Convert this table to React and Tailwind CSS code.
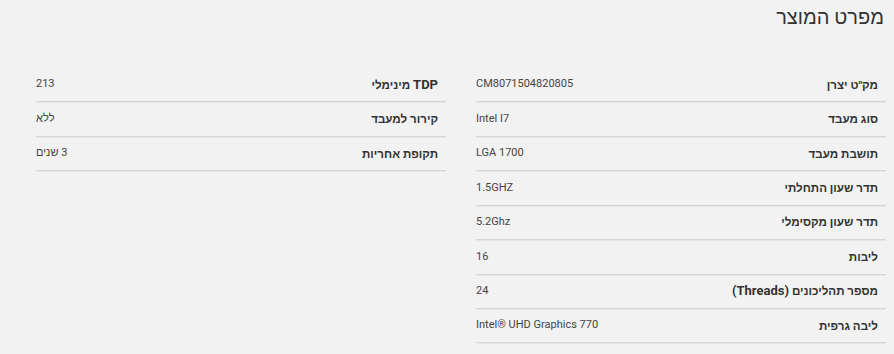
// Latin runs inside Hebrew labels keep the full 13px size; Hebrew text is set a touch smaller.
const Latin = ({ children }) => <span className="text-[13px]">{children}</span>;

const rightSpecs = [
  ["sku", <>מק"ט יצרן</>, "CM8071504820805"],
  ["cpu", <>סוג מעבד</>, "Intel I7"],
  ["socket", <>תושבת מעבד</>, "LGA 1700"],
  ["base", <>תדר שעון התחלתי</>, "1.5GHZ"],
  ["boost", <>תדר שעון מקסימלי</>, "5.2Ghz"],
  ["cores", <>ליבות</>, "16"],
  ["threads", <>מספר תהליכונים <Latin>(Threads)</Latin></>, "24"],
  ["gpu", <>ליבה גרפית</>, "Intel® UHD Graphics 770"],
];

const leftSpecs = [
  ["tdp", <><Latin>TDP</Latin> מינימלי</>, "213"],
  ["cooler", <>קירור למעבד</>, "ללא"],
  ["warranty", <>תקופת אחריות</>, "3 שנים"],
];

function SpecRow({ label, value }) {
  return (
    <div className="flex h-[34.43px] items-center justify-between border-b border-[#d6d6d6] shadow-[0_1px_0_#e6e6e6]">
      <span className="pr-[8px] text-[11.6px] font-bold leading-[16px] text-[#333]">{label}</span>
      <span className="text-[11px] text-[#444]">{value}</span>
    </div>
  );
}

export default function App() {
  return (
    <div
      dir="rtl"
      className="h-[354px] w-[894px] overflow-hidden bg-[#f2f2f2]"
      style={{ fontFamily: 'Roboto, "Liberation Sans", Arial, sans-serif' }}
    >
      <h2 className="pr-[10px] pt-[2px] text-[20px] font-normal leading-[30px] text-[#333]">
        מפרט המוצר
      </h2>
      <div className="mt-[36px] grid grid-cols-2 items-start gap-x-[30px] pl-[36px] pr-[8px]">
        <div className="flex flex-col">
          {rightSpecs.map(([k, l, v]) => (
            <SpecRow key={k} label={l} value={v} />
          ))}
        </div>
        <div className="flex flex-col">
          {leftSpecs.map(([k, l, v]) => (
            <SpecRow key={k} label={l} value={v} />
          ))}
        </div>
      </div>
    </div>
  );
}
